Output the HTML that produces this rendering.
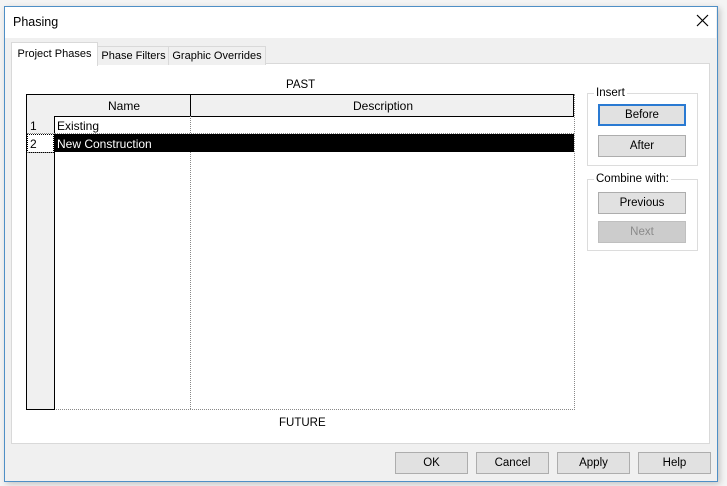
<!DOCTYPE html>
<html><head><style>
body{margin:0;width:727px;height:486px;background:#f4f4f4;position:relative;overflow:hidden;font-family:"Liberation Sans",sans-serif;font-size:11.5px;color:#000}
.a{position:absolute}
.win{left:4px;top:6px;width:712px;height:474px;border:1px solid #4f8fc6;background:#f0f0f0;box-shadow:2px 2px 6px rgba(0,0,0,.2)}
.btn{position:absolute;background:#e1e1e1;border:1px solid #adadad;text-align:center;box-sizing:border-box;line-height:21px}
.grp{position:absolute;border:1px solid #dcdcdc;box-sizing:border-box}
.lg{position:absolute;background:#fff;padding:0 2px;top:-7px;left:6px;line-height:12px}
.tab{font-size:11px}
</style></head><body>
<div class="a win"></div>
<div class="a" style="left:5px;top:7px;width:711px;height:31px;background:#fff"></div>
<div class="a" style="left:13px;top:15px;font-size:12.5px">Phasing</div>
<svg class="a" style="left:696px;top:14px" width="13" height="13"><path d="M1 1L12 12M12 1L1 12" stroke="#000" stroke-width="1.2"/></svg>
<div class="a" style="left:11px;top:63px;width:697px;height:379px;background:#fff;border:1px solid #d9d9d9"></div>
<div class="a tab" style="left:97px;top:46px;width:71px;height:18px;border:1px solid #d9d9d9;border-bottom:none;background:#f0f0f0;text-align:center;line-height:19px">Phase Filters</div>
<div class="a tab" style="left:168px;top:46px;width:96px;height:18px;border:1px solid #d9d9d9;border-bottom:none;background:#f0f0f0;text-align:center;line-height:19px">Graphic Overrides</div>
<div class="a tab" style="left:11px;top:42px;width:85px;height:23px;border:1px solid #d9d9d9;border-bottom:none;background:#fff;text-align:center;line-height:22px">Project Phases</div>
<div class="a" style="left:286px;top:79px">PAST</div>
<div class="a" style="left:279px;top:417px">FUTURE</div>
<!-- grid -->
<div class="a" style="left:26px;top:94px;width:548px;height:315px;border-right:1px dotted #888;border-bottom:1px dotted #888"></div>
<div class="a" style="left:26px;top:94px;width:27px;height:314px;background:#f0f0f0;border:1px solid #000"></div>
<div class="a" style="left:54px;top:94px;width:519px;height:21px;background:#f0f0f0;border:1px solid #000;border-left:none"></div>
<div class="a" style="left:190px;top:95px;width:1px;height:21px;background:#000"></div>
<div class="a" style="left:190px;top:116px;height:293px;border-left:1px dotted #888"></div>
<div class="a" style="left:108px;top:99px;font-size:12px">Name</div>
<div class="a" style="left:353px;top:99px;font-size:12px">Description</div>
<div class="a" style="left:54px;top:133px;width:520px;border-top:1px dotted #888"></div>
<div class="a" style="left:27px;top:133px;width:26px;border-top:1px dotted #888"></div>
<div class="a" style="left:30px;top:119px;font-size:12px">1</div>
<div class="a" style="left:57px;top:119px;font-size:12px">Existing</div>
<div class="a" style="left:27px;top:134px;width:25px;height:17px;border:1px dotted #000;background:#fff"></div>
<div class="a" style="left:30px;top:137px;font-size:12px">2</div>
<div class="a" style="left:54px;top:134px;width:520px;height:18px;background:#000"></div>
<div class="a" style="left:57px;top:137px;font-size:12px;color:#fff">New Construction</div>
<div class="a" style="left:27px;top:152px;width:26px;border-top:1px dotted #888"></div>
<!-- groups -->
<div class="grp" style="left:587px;top:93px;width:111px;height:73px"><span class="lg">Insert</span></div>
<div class="btn" style="left:598px;top:104px;width:88px;height:22px;border:2px solid #2a7ad2;line-height:19px">Before</div>
<div class="btn" style="left:598px;top:135px;width:88px;height:22px">After</div>
<div class="grp" style="left:587px;top:179px;width:111px;height:72px"><span class="lg">Combine with:</span></div>
<div class="btn" style="left:598px;top:192px;width:88px;height:22px">Previous</div>
<div class="btn" style="left:598px;top:221px;width:88px;height:22px;background:#cccccc;border-color:#bfbfbf;color:#8a8a8a">Next</div>
<!-- footer -->
<div class="btn" style="left:395px;top:452px;width:73px;height:22px">OK</div>
<div class="btn" style="left:476px;top:452px;width:73px;height:22px">Cancel</div>
<div class="btn" style="left:557px;top:452px;width:73px;height:22px">Apply</div>
<div class="btn" style="left:638px;top:452px;width:73px;height:22px">Help</div>
</body></html>
